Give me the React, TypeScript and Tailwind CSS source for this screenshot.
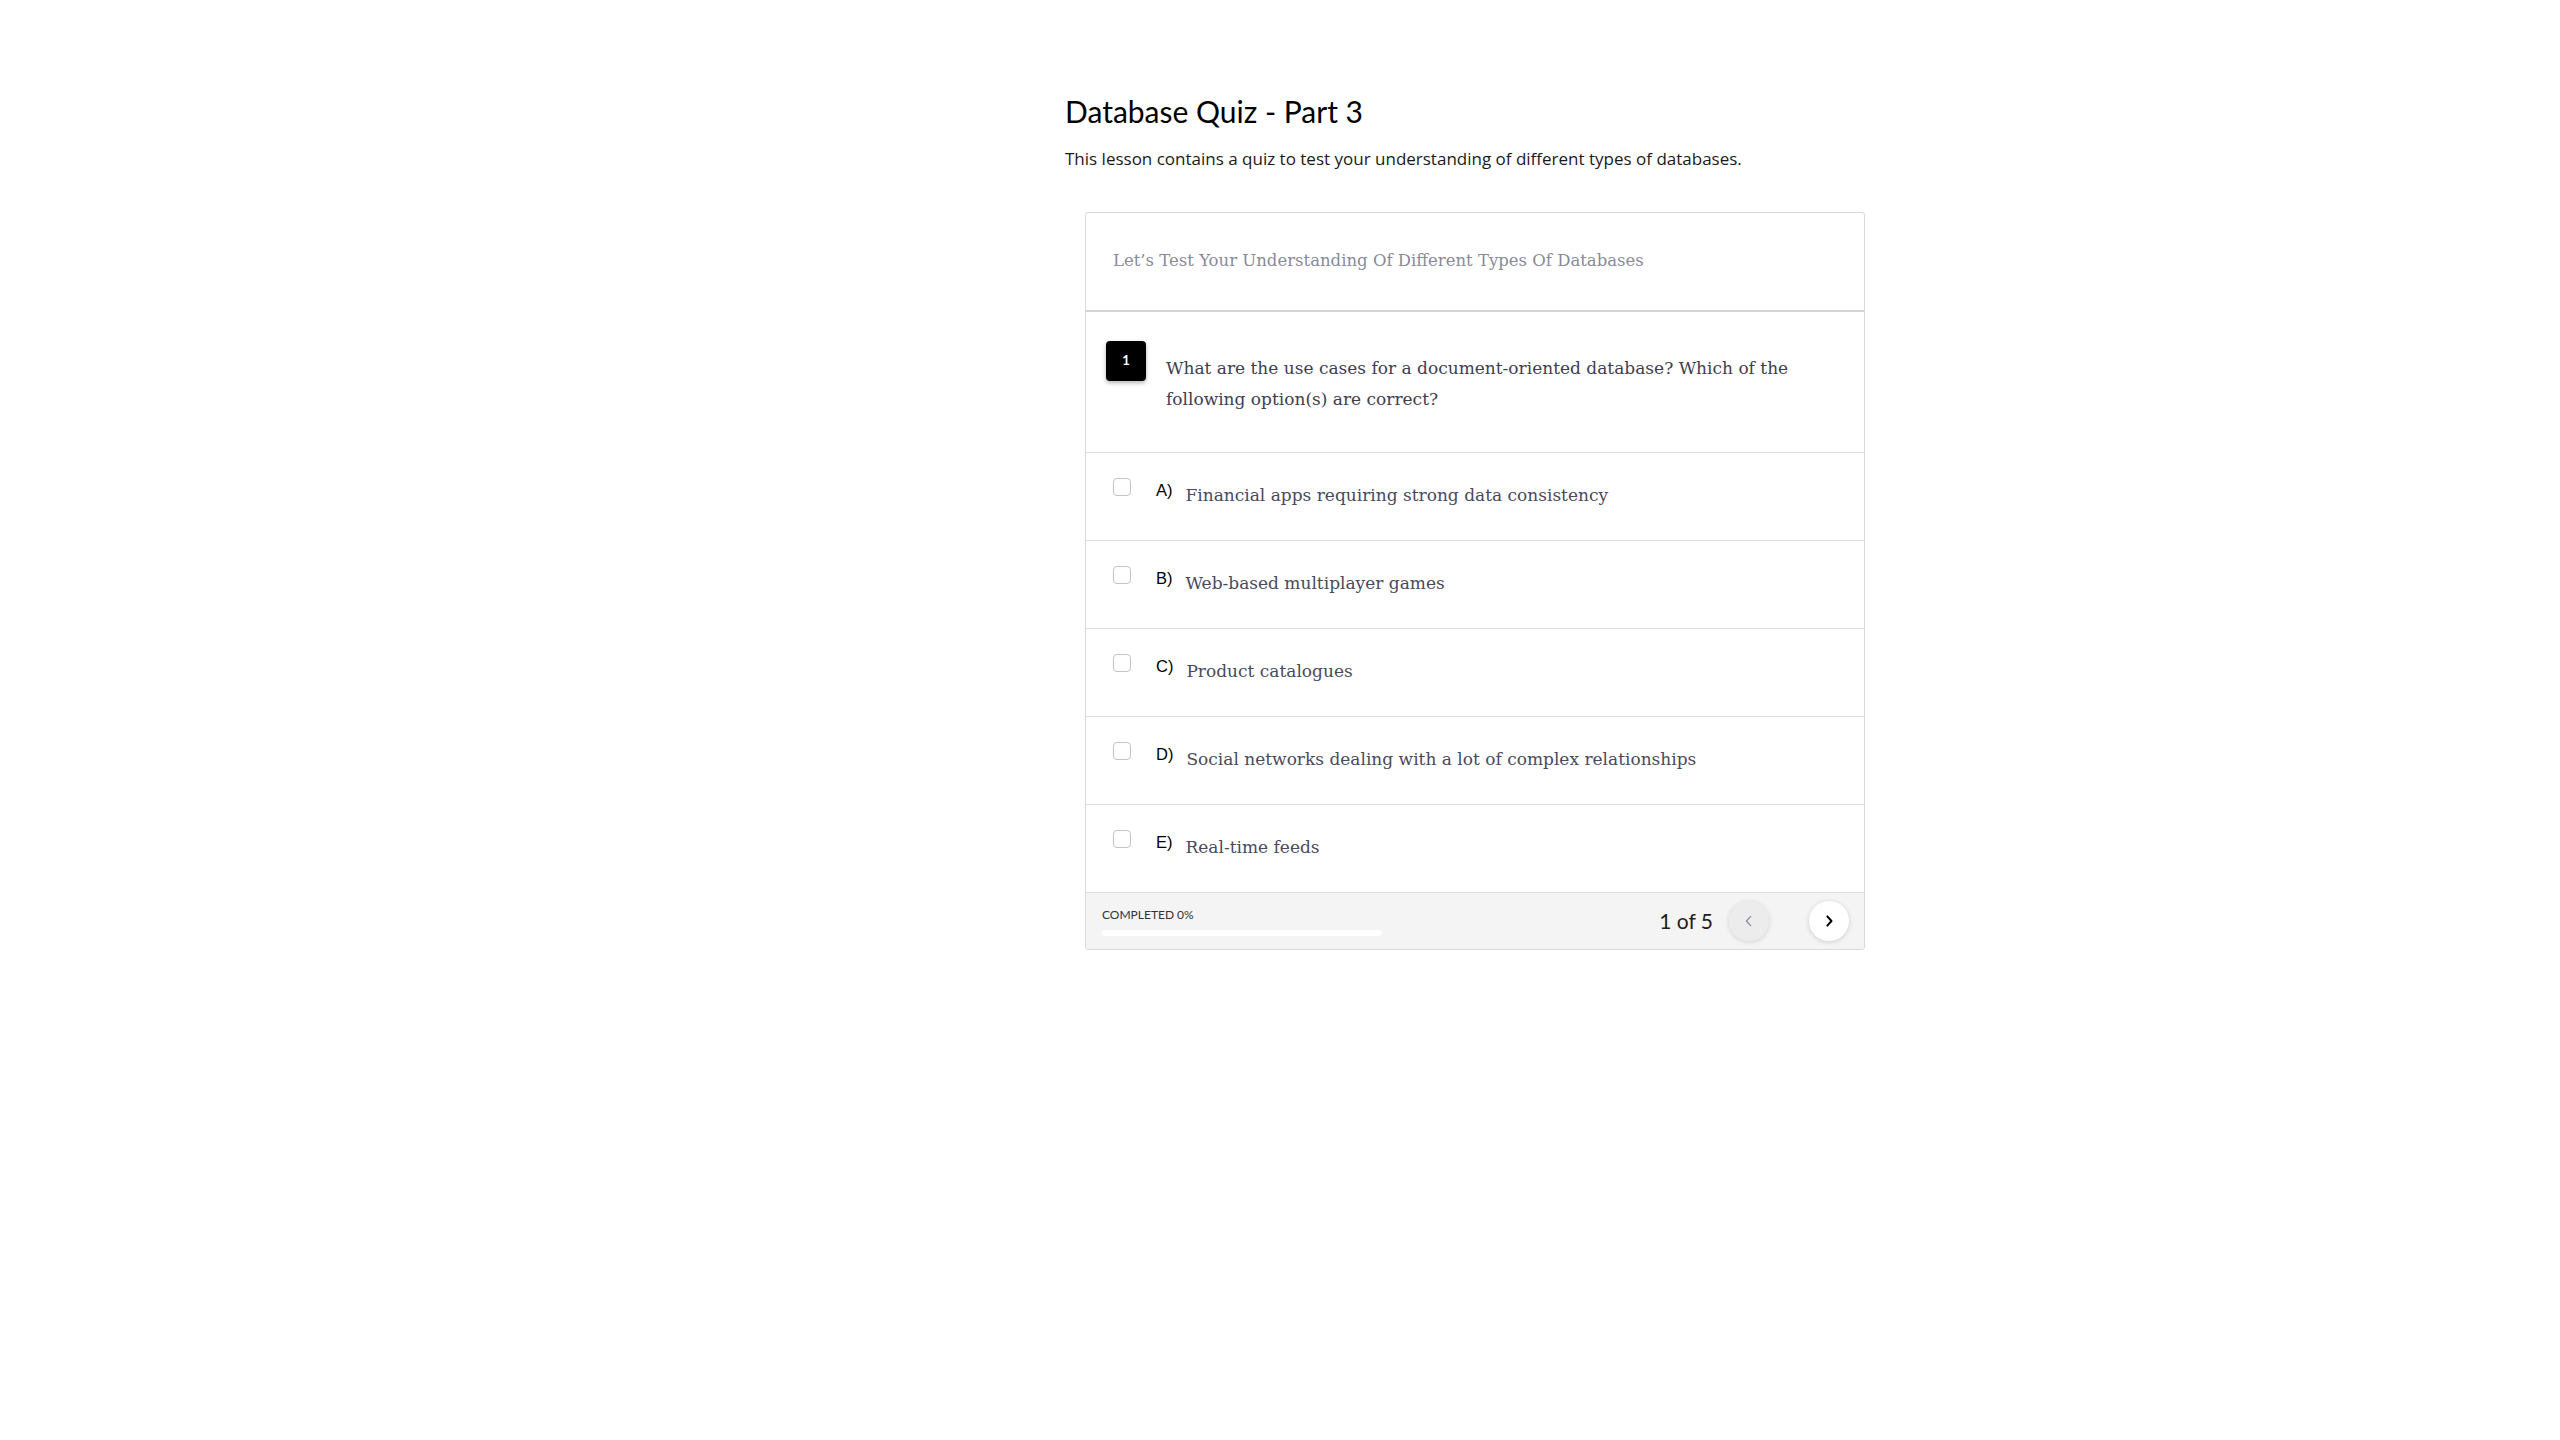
import React from "react";

const serif = { fontFamily: '"DejaVu Serif", "Liberation Serif", serif' };

function Chevron({ dir }: { dir: "left" | "right" }) {
  return (
    <svg width="20" height="20" viewBox="0 0 24 24" fill="none">
      {dir === "left" ? (
        <path d="M14 6.5 L9 12 L14 17.5" stroke="currentColor" strokeWidth="1.6" strokeLinecap="round" strokeLinejoin="round" />
      ) : (
        <path d="M10 6.5 L15 12 L10 17.5" stroke="currentColor" strokeWidth="2.4" strokeLinecap="round" strokeLinejoin="round" />
      )}
    </svg>
  );
}

const options = [
  { l: "A)", t: "Financial apps requiring strong data consistency" },
  { l: "B)", t: "Web-based multiplayer games" },
  { l: "C)", t: "Product catalogues" },
  { l: "D)", t: "Social networks dealing with a lot of complex relationships" },
  { l: "E)", t: "Real-time feeds" },
];

export default function App() {
  return (
    <div className="min-h-screen bg-white" style={{ fontFamily: 'Lato, "Open Sans", sans-serif' }}>
      <div className="ml-[1065px] w-[820px] pt-[91px]">
        <h1 className="text-[30px] leading-[40px] font-normal text-black">Database Quiz - Part 3</h1>
        <p
          className="mt-[16px] text-[17px] leading-[24px] text-[#1a1a1a]"
          style={{ fontFamily: '"Open Sans", Lato, sans-serif' }}
        >
          This lesson contains a quiz to test your understanding of different types of databases.
        </p>

        <div className="mt-[41px] ml-5 w-[780px] border border-[#d9d9dc] rounded-[3px] overflow-hidden">
          <div className="h-[99px] border-b-2 border-[#d4d4d8] pl-[27px] pt-[36px]">
            <div className="text-[16.5px] leading-[24px] text-[#8a8a98]" style={serif}>
              Let’s Test Your Understanding Of Different Types Of Databases
            </div>
          </div>

          <div className="h-[141px] border-b border-[#dcdcdf] pl-[20px] pr-[40px] pt-[29px] flex items-start">
            <div className="w-10 h-10 shrink-0 rounded-[4px] bg-black text-white text-[13px] font-bold flex items-center justify-center shadow-[0_2px_4px_rgba(0,0,0,0.3)]">
              1
            </div>
            <div className="ml-5 mt-[12px] text-[17px] leading-[31px] text-[#3e3e50]" style={serif}>
              What are the use cases for a document-oriented database? Which of the following option(s) are correct?
            </div>
          </div>

          {options.map((o) => (
            <div key={o.l} className="h-[88px] border-b border-[#dcdcdf] pl-[27px] pt-[25px] flex items-start">
              <div className="w-[18px] h-[18px] shrink-0 rounded-[4px] border border-[#c4c4c4] bg-white" />
              <div
                className="ml-[25px] mt-[2px] text-[16.5px] leading-[20px] text-black"
                style={{ fontFamily: '"Liberation Sans", Arial, sans-serif' }}
              >
                {o.l}
              </div>
              <div className="ml-[13px] mt-[5px] text-[17px] leading-[24px] text-[#4a4a5c]" style={serif}>
                {o.t}
              </div>
            </div>
          ))}

          <div className="h-[56px] bg-[#f4f4f4] flex items-center justify-between pl-[16px] pr-[15px]">
            <div className="flex flex-col mt-[2px]">
              <div className="text-[12px] leading-[14px] text-[#333] uppercase">Completed 0%</div>
              <div className="mt-[8px] w-[280px] h-[6px] rounded-full bg-white" />
            </div>
            <div className="flex items-center">
              <span className="text-[21px] leading-[28px] text-[#1e1e1e]">1 of 5</span>
              <button className="ml-4 w-10 h-10 rounded-full bg-[#ececec] shadow-[0_1px_5px_rgba(0,0,0,0.14)] flex items-center justify-center text-[#8e8e9a]">
                <Chevron dir="left" />
              </button>
              <button className="ml-10 w-10 h-10 rounded-full bg-white shadow-[0_1px_5px_rgba(0,0,0,0.16)] flex items-center justify-center text-black">
                <Chevron dir="right" />
              </button>
            </div>
          </div>
        </div>
      </div>
    </div>
  );
}
